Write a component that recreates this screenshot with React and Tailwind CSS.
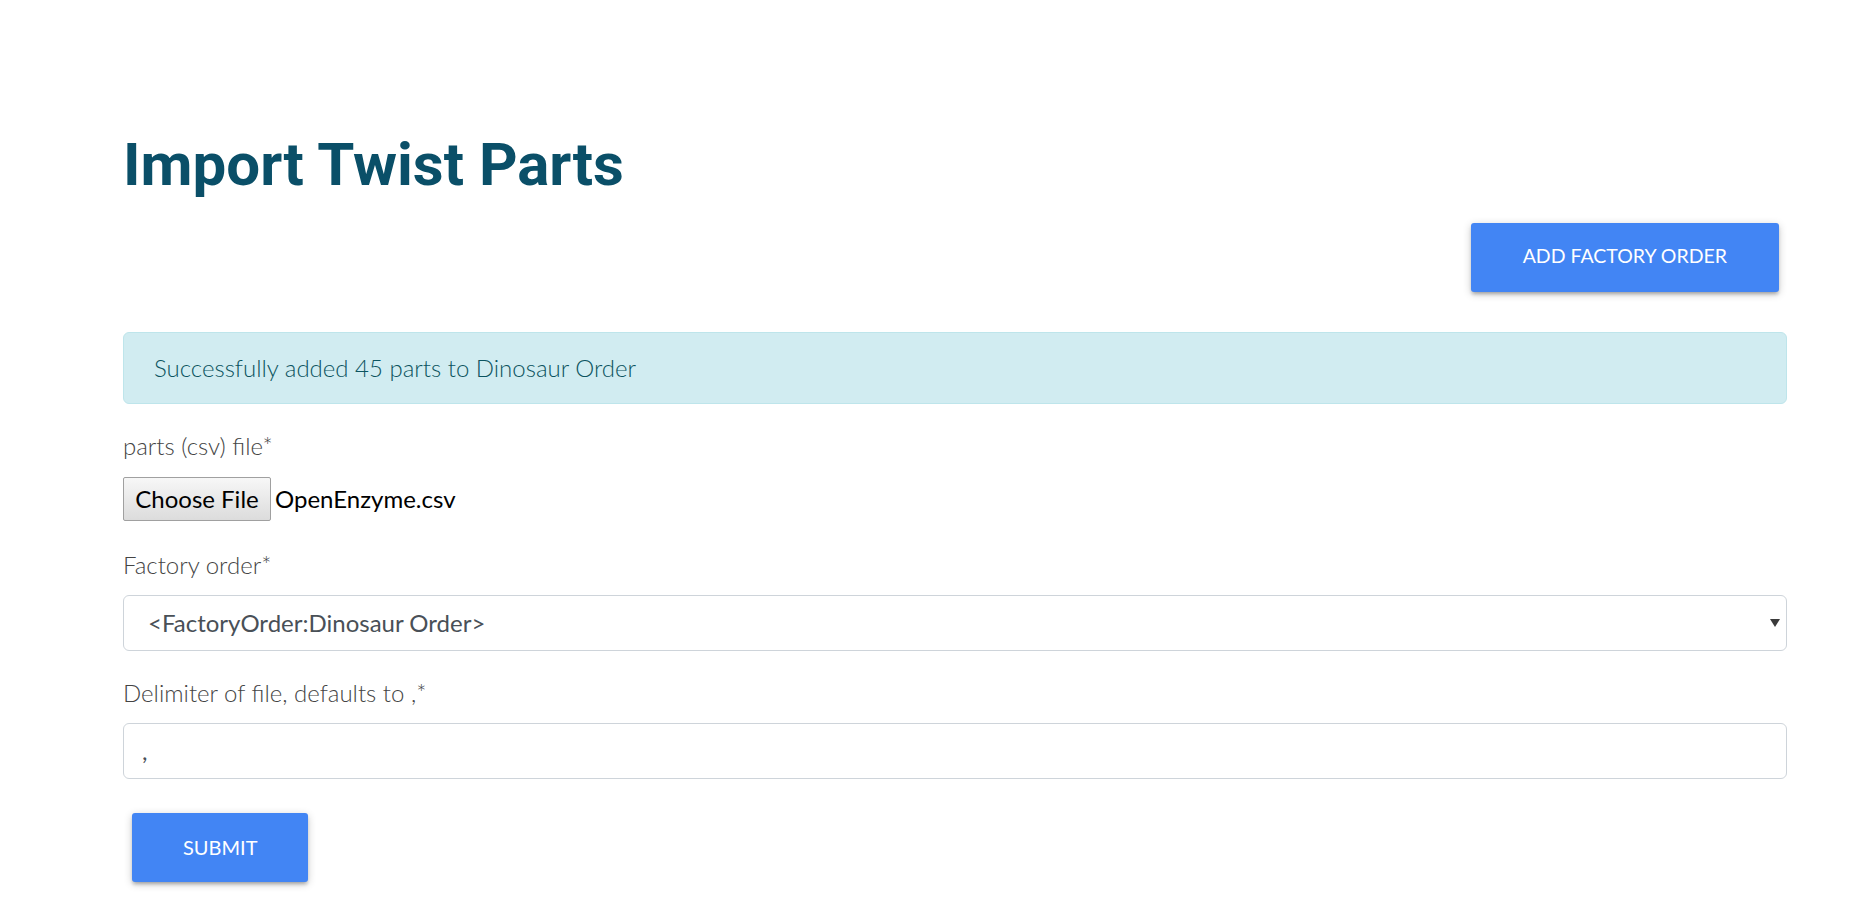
export default function App() {
  return (
    <div className="min-h-[920px] bg-white font-['Lato','Liberation_Sans',sans-serif] font-light text-[24px] leading-[36px] text-[#444]">
      <div className="ml-[123px] w-[1664px] pt-[129px]">
        {/* Título */}
        <h1 className="font-['Roboto','Liberation_Sans',sans-serif] font-bold text-[60px] leading-[72px] text-[#0a4f68]">
          Import Twist Parts
        </h1>

        <div className="flex justify-end pr-[8px] mt-[22px]">
          <button className="h-[69px] px-[52px] pb-[3px] rounded-[3px] bg-[#4285f4] text-white font-normal text-[19.5px] uppercase shadow-[0_3px_3px_0_rgba(0,0,0,0.14),0_4px_2px_-3px_rgba(0,0,0,0.12),0_2px_8px_0_rgba(0,0,0,0.2)]">
            Add Factory Order
          </button>
        </div>

        {/* Aviso */}
        <div className="mt-[40px] mb-[24px] rounded-[6px] border border-[#bee5eb] bg-[#d1ecf1] px-[30px] py-[17px] text-[#0c5460]">
          Successfully added 45 parts to Dinosaur Order
        </div>

        <form>
          <div className="mb-[26px]">
            <label className="block mb-[13px]">parts (csv) file*</label>
            <div className="flex items-center gap-[4px] font-normal text-black">
              <span className="h-[44px] w-[148px] flex items-center justify-center rounded-[2px] border border-[#a0a0a0] bg-gradient-to-b from-[#f7f7f7] to-[#dcdcdc]">
                Choose File
              </span>
              <span>OpenEnzyme.csv</span>
            </div>
          </div>

          <div className="mb-[24px]">
            <label className="block mb-[12px]">Factory order*</label>
            <div className="h-[56px] flex items-center justify-between rounded-[6px] border border-[#ced4da] pl-[24px] pr-[6px] font-normal text-[#495057]">
              <span>&lt;FactoryOrder:Dinosaur Order&gt;</span>
              <svg width="10" height="8" viewBox="0 0 10 8">
                <path d="M0 0 L10 0 L5 8 Z" fill="#3a3a3a" />
              </svg>
            </div>
          </div>

          <div className="mb-[34px]">
            <label className="block mb-[12px]">Delimiter of file, defaults to ,*</label>
            <div className="h-[56px] flex items-center rounded-[6px] border border-[#ced4da] px-[18px] font-normal text-[#495057]">
              ,
            </div>
          </div>

          <div className="pl-[9px]">
            <button type="button" className="h-[69px] px-[51px] pb-[2px] rounded-[3px] bg-[#4285f4] text-white font-normal text-[20px] uppercase shadow-[0_3px_3px_0_rgba(0,0,0,0.14),0_4px_2px_-3px_rgba(0,0,0,0.12),0_2px_8px_0_rgba(0,0,0,0.2)]">
              Submit
            </button>
          </div>
        </form>
      </div>
    </div>
  )
}
